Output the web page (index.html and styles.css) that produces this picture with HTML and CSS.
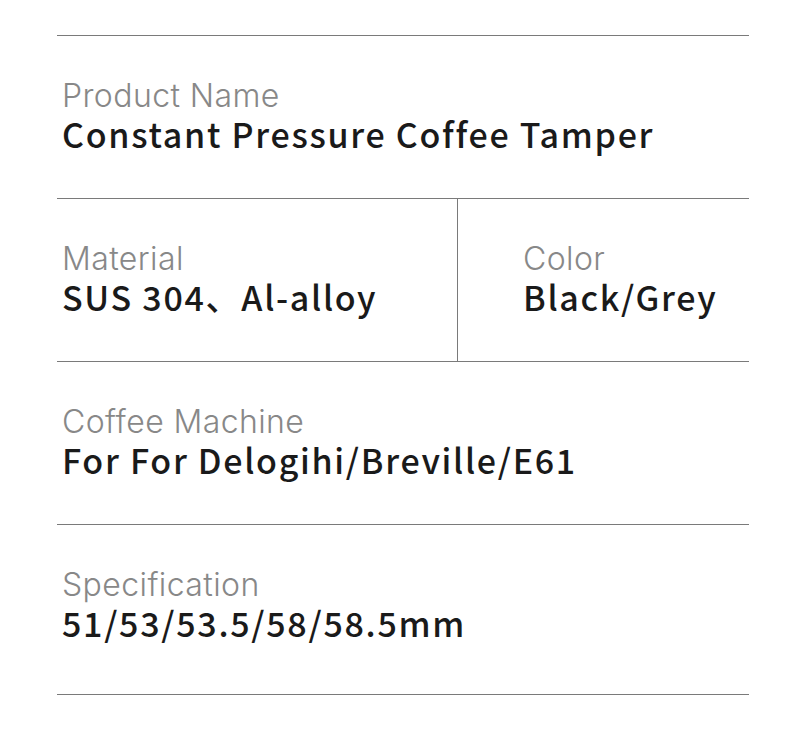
FILE: index.html
```html
<!DOCTYPE html>
<html lang="en">
<head>
<meta charset="utf-8">
<link rel="stylesheet" href="styles.css">
</head>
<body>
<div class="sheet">
  <div class="row">
    <div class="cell">
      <div class="label">Product Name</div>
      <div class="value">Constant Pressure Coffee Tamper</div>
    </div>
  </div>
  <div class="row split">
    <div class="cell">
      <div class="label">Material</div>
      <div class="value">SUS 304、Al-alloy</div>
    </div>
    <div class="cell right">
      <div class="label">Color</div>
      <div class="value">Black/Grey</div>
    </div>
  </div>
  <div class="row">
    <div class="cell">
      <div class="label">Coffee Machine</div>
      <div class="value">For For Delogihi/Breville/E61</div>
    </div>
  </div>
  <div class="row last">
    <div class="cell">
      <div class="label">Specification</div>
      <div class="value">51/53/53.5/58/58.5mm</div>
    </div>
  </div>
</div>
</body>
</html>
```
FILE: styles.css
```css
html, body {
  margin: 0;
  padding: 0;
  background: #ffffff;
}
body {
  font-family: "Noto Sans CJK SC", "Noto Sans", sans-serif;
}
.sheet {
  width: 692px;
  margin: 35px 0 0 57px;
  border-top: 1.5px solid #7a7a7a;
}
.row {
  height: 162px;
  border-bottom: 1.5px solid #7a7a7a;
  display: flex;
}
.row.last {
  height: 169px;
}
.split .cell {
  flex: 0 0 400px;
}
.split .cell.right {
  flex: 1;
  border-left: 1.5px solid #7a7a7a;
  padding-left: 65px;
}
.cell {
  flex: 1;
  padding: 43.5px 0 0 5px;
  box-sizing: border-box;
}
.label {
  font-family: Inter, "Noto Sans", sans-serif;
  font-size: 32px;
  line-height: 32px;
  font-weight: 300;
  letter-spacing: 0.4px;
  color: #888888;
}
.value {
  margin-top: 5px;
  font-size: 34px;
  line-height: 1;
  font-weight: 500;
  letter-spacing: 1.7px;
  color: #1a1a1a;
}
```
